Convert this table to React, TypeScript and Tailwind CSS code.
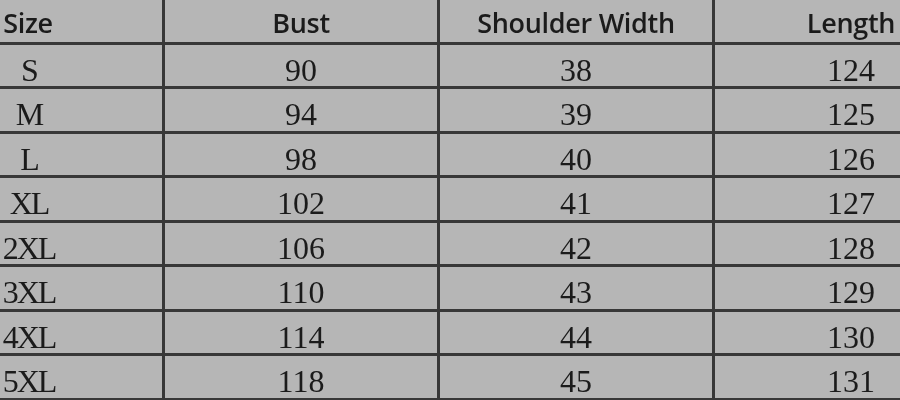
const header = ['Size', 'Bust', 'Shoulder Width', 'Length']

const rows = [
  ['S', '90', '38', '124'],
  ['M', '94', '39', '125'],
  ['L', '98', '40', '126'],
  ['XL', '102', '41', '127'],
  ['2XL', '106', '42', '128'],
  ['3XL', '110', '43', '129'],
  ['4XL', '114', '44', '130'],
  ['5XL', '118', '45', '131'],
]

export default function App() {
  return (
    <div className="w-[900px] h-[400px] overflow-hidden bg-[#b6b6b6] text-[#1b1b1b]">
      <div className="ml-[-110px] w-[1100px] blur-[0.5px]">
        <div className="grid grid-cols-[275px_275px_275px_275px] h-[44.5px] border-b-[3px] border-[#383838] font-['Open_Sans',sans-serif] text-[27px] font-semibold tracking-[-0.3px]">
          {header.map((h, i) => (
            <div
              key={h}
              className={
                i === 0
                  ? 'flex items-center justify-center border-r-[3px] border-[#383838] pt-[3px] pl-[4px]'
                  : 'flex items-center justify-center border-r-[3px] border-[#383838] pt-[3px]'
              }
            >
              {h}
            </div>
          ))}
        </div>
        {rows.map((r) => (
          <div
            key={r[0]}
            className="grid grid-cols-[275px_275px_275px_275px] h-[44.5px] border-b-[3px] border-[#383838] font-['Liberation_Serif',serif] text-[32px]"
          >
            {r.map((c, i) => (
              <div
                key={i}
                className={
                  i === 0
                    ? 'flex items-center justify-center border-r-[3px] border-[#383838] pt-[1px] pl-[6px] tracking-[-2px]'
                    : 'flex items-center justify-center border-r-[3px] border-[#383838] pt-[1px]'
                }
              >
                {c}
              </div>
            ))}
          </div>
        ))}
      </div>
    </div>
  )
}
